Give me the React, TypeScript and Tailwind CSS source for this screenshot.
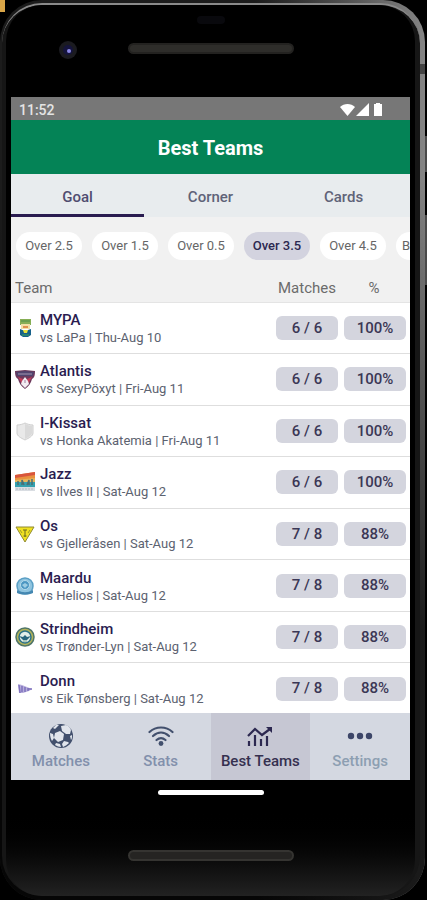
import type { ReactNode } from "react";
import clsx from "clsx";

interface TeamRow {
  name: string;
  fixture: string;
  matches: string;
  percent: string;
  crest: ReactNode;
}

const tabs = ["Goal", "Corner", "Cards"];
const filters = ["Over 2.5", "Over 1.5", "Over 0.5", "Over 3.5", "Over 4.5", "B"];

const teams: TeamRow[] = [
  {
    name: "MYPA",
    fixture: "vs LaPa | Thu-Aug 10",
    matches: "6 / 6",
    percent: "100%",
    crest: (
      <>
        <path d="M5 1h11v6H5z" fill="#86ae55" />
        <path d="M6 3h9" stroke="#4f8f4a" />
        <path d="M6 6h9v5H6z" fill="#f2dfa6" />
        <path d="M8 9h5" stroke="#d9772f" strokeWidth="1.5" />
        <path d="M5 11l5 2 6-2v6l-3 2H8l-3-2z" fill="#17628a" />
        <path d="M8 12h5l-1 3H9z" fill="#e9e13c" />
        <path d="M7 17h7" stroke="#3da35b" />
      </>
    )
  },
  {
    name: "Atlantis",
    fixture: "vs SexyPöxyt | Fri-Aug 11",
    matches: "6 / 6",
    percent: "100%",
    crest: (
      <>
        <path d="M0 2l10-1 10 1c0 5-1 7-3 8-1 4-3 7-7 10-4-3-6-6-7-10C1 9 0 7 0 2z" fill="#6d3a5c" />
        <path d="M1 3l9-1 9 1-1 4H2z" fill="#51456f" />
        <path d="M3 5h14" stroke="#a596b0" />
        <path d="M3 8l5 2-1 5zM17 8l-5 2 1 5z" fill="#c43d5b" />
        <path d="M7 12l3-4 3 4 1 3-4 4-4-4z" fill="#f3edf3" />
        <path d="M10 11v3" stroke="#9a7fa0" />
      </>
    )
  },
  {
    name: "I-Kissat",
    fixture: "vs Honka Akatemia | Fri-Aug 11",
    matches: "6 / 6",
    percent: "100%",
    crest: (
      <>
        <path d="M2 4c3 0 6-1 8-2 2 1 5 2 8 2v8c0 3-4 5-8 7-4-2-8-4-8-7z" fill="#e9e9e9" stroke="#cfcfcf" />
        <path d="M10 3c3 1 5 2 7 2v7c0 2-3 4-7 6z" fill="#dadada" />
      </>
    )
  },
  {
    name: "Jazz",
    fixture: "vs Ilves II | Sat-Aug 12",
    matches: "6 / 6",
    percent: "100%",
    crest: (
      <>
        <path d="M0 3l20-3v18H0z" fill="#e9913f" />
        <path d="M0 3l20-3v3L0 6z" fill="#d8553d" />
        <path d="M0 8l20-2v4H0z" fill="#e8b45a" />
        <path d="M0 10h20v5H0z" fill="#35a0ae" />
        <path d="M3 13V9M7 13V8l2 5M12 13l2-5v5M17 13V7" fill="none" stroke="#4b6d73" strokeWidth="1.5" />
        <path d="M0 15h20v4H0z" fill="#d9dde2" />
        <path d="M1 17h17" stroke="#b3bac2" strokeDasharray="2 1" />
      </>
    )
  },
  {
    name: "Os",
    fixture: "vs Gjelleråsen | Sat-Aug 12",
    matches: "7 / 8",
    percent: "88%",
    crest: (
      <>
        <path d="M1 3h18l-9 15z" fill="#f0e120" stroke="#8f8a32" />
        <path d="M8 6h4M10 6v7M8.5 12h3" stroke="#6b6821" />
        <path d="M5 6l2 3M15 6l-2 3" stroke="#a19b2a" />
      </>
    )
  },
  {
    name: "Maardu",
    fixture: "vs Helios | Sat-Aug 12",
    matches: "7 / 8",
    percent: "88%",
    crest: (
      <>
        <circle cx="10" cy="10" r="8" fill="#8fc4df" stroke="#5a9fc5" strokeWidth="1.5" />
        <circle cx="10" cy="9" r="4.5" fill="#4b96c2" stroke="#b5dbeb" />
        <path d="M7 9l3-2 3 2-3 3z" fill="#9dcde3" />
        <path d="M2 14c5 3 11 3 16 0v3c-5 2-11 2-16 0z" fill="#4487b1" />
      </>
    )
  },
  {
    name: "Strindheim",
    fixture: "vs Trønder-Lyn | Sat-Aug 12",
    matches: "7 / 8",
    percent: "88%",
    crest: (
      <>
        <circle cx="10" cy="10" r="9" fill="#b4b45a" stroke="#4f7568" strokeWidth="1.5" />
        <circle cx="10" cy="10" r="6" fill="#e3eee9" stroke="#2d7187" strokeWidth="1.5" />
        <path d="M4 9l4 1 2-2 2 2 4-1-4 4H8z" fill="#28657d" />
        <path d="M8 14h4" stroke="#6fa08b" />
      </>
    )
  },
  {
    name: "Donn",
    fixture: "vs Eik Tønsberg | Sat-Aug 12",
    matches: "7 / 8",
    percent: "88%",
    crest: (
      <>
        <path d="M3 5l4 1 10 4-3 2-6 2H4z" fill="#b6addb" />
        <path d="M4 6l1 8M7 7v6M10 8v5M13 9v3M13 10h4" stroke="#7f71bd" strokeWidth="1.5" />
      </>
    )
  }
];

function SoccerIcon() {
  return (
    <svg viewBox="0 0 24 24" className="size-6" aria-hidden="true">
      <circle cx="12" cy="12" r="12" fill="#42506d" />
      <g fill="#e1e5ec">
        <path d="M6 9l5-2 4 3-1 6-5 2-4-4z" />
        <path d="M12 2l5-1c3 1 4 3 5 5l-1 4-4 0-4-3z" />
        <path d="M15 17l4 1 1 1c-2 2-4 3-6 4l-1-3z" />
        <path d="M1 9l3 1 1 4-2 3c-1-2-2-4-2-8z" />
        <path d="M4 4l3-3 3 0-4 4z" />
        <path d="M7 19l4 1 1 3c-2 0-4-1-6-2z" />
        <path d="M21 12l2-1c0 2 0 4-1 5z" />
      </g>
    </svg>
  );
}

function SignalIcon() {
  return (
    <svg viewBox="0 0 26 24" className="h-6 w-[26px]" aria-hidden="true">
      <g fill="none" stroke="#42506d" strokeWidth="2.2" strokeLinecap="round">
        <path d="M1.5 8c6.5-6 16.5-6 23 0" />
        <path d="M5 12c5-4.5 11-4.5 16 0" />
        <path d="M8.5 16c3-2.5 6-2.5 9 0" />
      </g>
      <circle cx="13" cy="19.5" r="2.4" fill="#42506d" />
    </svg>
  );
}

function TrendIcon() {
  return (
    <svg viewBox="0 0 26 24" className="h-6 w-[26px]" aria-hidden="true">
      <g fill="none" stroke="#2c2850">
        <path d="M1 12l7-7 7 6 8-6" strokeWidth="2.2" />
        <path d="M2 17v5M8 11v11M14 15v7M20 12v10" strokeWidth="2.2" />
      </g>
      <path d="M19 3h6v6z" fill="#2c2850" />
    </svg>
  );
}

function DotsIcon() {
  return (
    <svg viewBox="0 0 26 24" className="h-6 w-[26px]" fill="#3d4668" aria-hidden="true">
      <circle cx="4" cy="12" r="3.2" />
      <circle cx="13" cy="12" r="3.2" />
      <circle cx="22" cy="12" r="3.2" />
    </svg>
  );
}

const navItems = [
  { label: "Matches", icon: <SoccerIcon /> },
  { label: "Stats", icon: <SignalIcon /> },
  { label: "Best Teams", icon: <TrendIcon />, active: true },
  { label: "Settings", icon: <DotsIcon />, muted: true }
];

function StatusBar() {
  return (
    <div className="flex h-[23px] shrink-0 items-center justify-between bg-[#777777] pl-2 pr-[26px] pt-0.5 text-sm font-medium text-[#e4e4e4]">
      <span>11:52</span>
      <svg viewBox="0 0 44 14" className="h-3.5 w-11" fill="#ffffff" role="img" aria-label="Wi-Fi, signal and battery">
        <path d="M0 4c4-4 11-4 15 0L7.5 13z" />
        <path d="M29 0v13H16z" />
        <path d="M36 0h4v1h2v12h-8V1h2z" />
      </svg>
    </div>
  );
}

function FilterChips() {
  return (
    <div className="flex h-[58px] shrink-0 items-center gap-2.5 overflow-hidden pl-[5px]">
      {filters.map((filter) => (
        <button
          key={filter}
          type="button"
          className={clsx(
            "h-7 shrink-0 text-[13px]",
            filter === "B" ? "w-4 rounded-l-full pl-1" : "w-[66px] rounded-full",
            filter === "Over 3.5" ? "bg-[#d3d3df] font-medium text-[#2c2850]" : "bg-white text-[#666666]"
          )}
        >
          {filter}
        </button>
      ))}
    </div>
  );
}

function Badge({ children }: { children: ReactNode }) {
  return (
    <span className="mr-1 flex h-6 items-center justify-center rounded-md bg-[#d4d5de] text-[15px] font-medium text-[#3b3755]">
      {children}
    </span>
  );
}

function TeamsTable() {
  return (
    <table className="h-[440px] w-full table-fixed bg-white">
      <thead className="bg-[#f1f1f1] text-[15px] text-[#6b6b6b]">
        <tr className="h-[27px] border-b border-[#e4e4e4]">
          <th className="pl-1 text-left font-normal">Team</th>
          <th className="w-[68px] pr-1.5 font-normal">Matches</th>
          <th className="w-[66px] pr-1.5 font-normal">%</th>
        </tr>
      </thead>
      <tbody>
        {teams.map((team) => (
          <tr key={team.name} className="border-b border-[#dedede]">
            <td>
              <div className="flex items-center gap-1 pl-1">
                <svg viewBox="0 0 20 20" className="size-5" aria-hidden="true">
                  {team.crest}
                </svg>
                <div className="whitespace-nowrap pt-0.5 pl-px">
                  <p className="text-[15px] leading-[18px] font-medium text-[#2a1c50]">{team.name}</p>
                  <p className="text-[13px] leading-[18px] text-[#5c6270]">{team.fixture}</p>
                </div>
              </div>
            </td>
            <td className="pr-0.5">
              <Badge>{team.matches}</Badge>
            </td>
            <td>
              <Badge>{team.percent}</Badge>
            </td>
          </tr>
        ))}
      </tbody>
    </table>
  );
}

function BottomNav() {
  return (
    <nav className="grid h-[67px] shrink-0 grid-cols-4 bg-[#d4d8e1]">
      {navItems.map((item) => (
        <button
          key={item.label}
          type="button"
          className={clsx(
            "flex flex-col items-center justify-center gap-0.5 whitespace-nowrap pt-0.5 text-[15px] leading-[22px] font-medium",
            item.active ? "bg-[#c6c7d3] text-[#35304f]" : item.muted ? "text-[#8d9fb2]" : "text-[#8290ac]"
          )}
        >
          {item.icon}
          {item.label}
        </button>
      ))}
    </nav>
  );
}

/** Metal rim, side buttons and glass behind the screen */
function DeviceFrame() {
  return (
    <div className="absolute inset-0" aria-hidden="true">
      <div className="absolute left-0 top-0 h-3 w-[5px] bg-[#d9a648]" />
      <div className="absolute right-0 top-[136px] h-9 w-1 bg-[#4a4a4a]" />
      <div className="absolute right-0 top-[215px] h-[70px] w-1 bg-[#4a4a4a]" />
      <div className="absolute inset-y-0 left-0 right-0.5 overflow-hidden rounded-[42px] bg-linear-to-r from-[#1c1c1c] from-60% to-[#858585]">
        <div className="absolute inset-0 bg-linear-to-b from-transparent from-20% to-black/80 to-70%" />
        <div className="absolute right-0 top-[64px] h-2.5 w-2 bg-[#444444]" />
        <div className="absolute bottom-1 left-0.5 right-[5px] top-[3px] rounded-[40px] border-t-2 border-[#8a8a8a] bg-[#161616]" />
        <div className="absolute bottom-1 left-1.5 right-2.5 top-[5px] rounded-[36px] bg-linear-to-b from-black from-90% to-[#222222]" />
      </div>
    </div>
  );
}

export default function App() {
  return (
    <div className="relative h-screen overflow-hidden bg-black font-[Roboto,sans-serif]">
      <DeviceFrame />

      <div className="relative flex h-full flex-col pl-[11px] pr-[17px]">
        <div className="relative flex h-[97px] shrink-0 items-center justify-center">
          <div className="absolute left-12 top-[41px] flex size-[18px] items-center justify-center rounded-full bg-[#1b1b20]">
            <div className="flex size-2.5 items-end justify-end rounded-full bg-[#15143c] p-0.5">
              <div className="size-1 rounded-full bg-[#8a86e8]" />
            </div>
          </div>
          <div className="absolute top-4 h-2 w-7 rounded-full bg-[#09090d]" />
          <div className="h-[11px] w-[166px] rounded-full border-2 border-[#232220] bg-[#2e2d2a]" />
        </div>
        <main className="flex min-h-0 flex-1 flex-col overflow-hidden bg-[#f1f1f1]">
          <StatusBar />
          <header className="flex h-[54px] shrink-0 items-center justify-center bg-[#048356] pt-0.5">
            <h1 className="text-xl font-bold text-white">Best Teams</h1>
          </header>
          <div className="grid h-[43px] shrink-0 grid-cols-3 bg-[#e8ecee] text-[15px] font-medium" role="tablist">
            {tabs.map((tab) => (
              <button
                key={tab}
                type="button"
                role="tab"
                aria-selected={tab === "Goal"}
                className={clsx(
                  "border-b-[3px] pt-1.5",
                  tab === "Goal" ? "border-[#2a1c50] text-[#504c70]" : "border-transparent text-[#5f6378]"
                )}
              >
                {tab}
              </button>
            ))}
          </div>
          <FilterChips />
          <div className="min-h-0 flex-1 overflow-hidden">
            <TeamsTable />
          </div>
          <BottomNav />
        </main>
        <div className="flex h-[120px] shrink-0 flex-col items-center gap-[55px] pt-2.5">
          <div className="h-[5px] w-[106px] rounded-full bg-white" />
          <div className="h-[11px] w-[166px] rounded-full border-2 border-[#353431] bg-[#252422]" />
        </div>
      </div>
    </div>
  );
}
